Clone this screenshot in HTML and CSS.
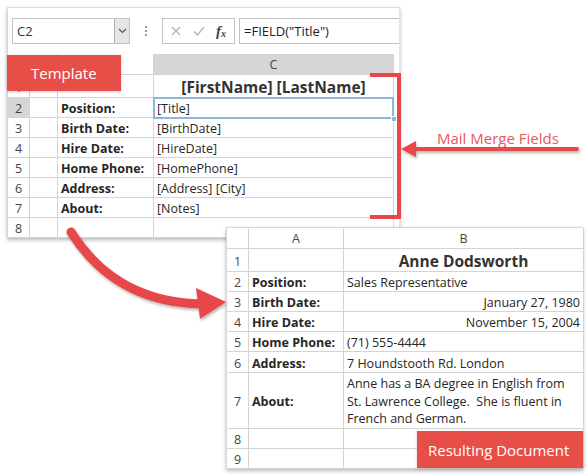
FILE: index.html
```html
<!DOCTYPE html>
<html>
<head>
<meta charset="utf-8">
<link rel="stylesheet" href="styles.css">
</head>
<body>
<div class="canvas">
  <div class="sheet sheet-template">
    <div class="fbar">
      <div class="namebox"><span class="nb-text">C2</span><span class="dd"><svg width="9" height="6" viewBox="0 0 9 6"><path d="M1 1 L4.5 4.5 L8 1" fill="none" stroke="#555" stroke-width="1.2"/></svg></span></div>
      <div class="dots"><i></i><i></i><i></i></div>
      <div class="fxbox">
        <svg class="ico" width="10" height="10" viewBox="0 0 10 10"><path d="M1 1 L9 9 M9 1 L1 9" stroke="#b5b5b5" stroke-width="1.4"/></svg>
        <svg class="ico" width="12" height="10" viewBox="0 0 12 10"><path d="M1 5.5 L4.5 9 L11 1" fill="none" stroke="#b5b5b5" stroke-width="1.4"/></svg>
        <span class="fx">f<sub>x</sub></span>
      </div>
      <div class="formula">=FIELD("Title")</div>
    </div>
    <div class="grid grid-t">
      <div class="c rh"></div><div class="c hd"></div><div class="c hd"></div><div class="c hd sel">C</div>
      <div class="c rh">1</div><div class="c"></div><div class="c"></div><div class="c title">[FirstName] [LastName]</div>
      <div class="c rh selrow">2</div><div class="c"></div><div class="c b">Position:</div><div class="c">[Title]</div>
      <div class="c rh">3</div><div class="c"></div><div class="c b">Birth Date:</div><div class="c">[BirthDate]</div>
      <div class="c rh">4</div><div class="c"></div><div class="c b">Hire Date:</div><div class="c">[HireDate]</div>
      <div class="c rh">5</div><div class="c"></div><div class="c b">Home Phone:</div><div class="c">[HomePhone]</div>
      <div class="c rh">6</div><div class="c"></div><div class="c b">Address:</div><div class="c">[Address] [City]</div>
      <div class="c rh">7</div><div class="c"></div><div class="c b">About:</div><div class="c">[Notes]</div>
      <div class="c rh">8</div><div class="c"></div><div class="c"></div><div class="c"></div>
      <div class="selbox"><span class="handle"></span></div>
    </div>
  </div>

  <div class="sheet sheet-result">
    <div class="grid grid-r">
      <div class="c rh"></div><div class="c hd">A</div><div class="c hd">B</div>
      <div class="c rh">1</div><div class="c"></div><div class="c title">Anne Dodsworth</div>
      <div class="c rh">2</div><div class="c b">Position:</div><div class="c">Sales Representative</div>
      <div class="c rh">3</div><div class="c b">Birth Date:</div><div class="c right">January 27, 1980</div>
      <div class="c rh">4</div><div class="c b">Hire Date:</div><div class="c right">November 15, 2004</div>
      <div class="c rh">5</div><div class="c b">Home Phone:</div><div class="c">(71) 555-4444</div>
      <div class="c rh">6</div><div class="c b">Address:</div><div class="c">7 Houndstooth Rd. London</div>
      <div class="c rh">7</div><div class="c b">About:</div><div class="c wrap">Anne has a BA degree in English from St. Lawrence College.&nbsp; She is fluent in French and German.</div>
      <div class="c rh">8</div><div class="c"></div><div class="c"></div>
      <div class="c rh">9</div><div class="c"></div><div class="c"></div>
    </div>
  </div>

  <div class="label label-template">Template</div>
  <div class="label label-result">Resulting Document</div>
  <div class="callout">Mail Merge Fields</div>

  <svg class="annot" width="588" height="474" viewBox="0 0 588 474">
    <defs>
      <filter id="sh" x="-20%" y="-20%" width="140%" height="140%">
        <feDropShadow dx="1" dy="2" stdDeviation="1.5" flood-color="#000" flood-opacity="0.3"/>
      </filter>
    </defs>
    <path d="M370 75 H399 V217 H370" fill="none" stroke="#e8474a" stroke-width="4"/>
    <g filter="url(#sh)">
      <path d="M577 149 H412" stroke="#e8474a" stroke-width="4" stroke-linecap="round"/>
      <path d="M401 149 L416 141 L416 157 Z" fill="#e8474a"/>
    </g>
    <g filter="url(#sh)">
      <path d="M71 232 Q 115 302 201 304" fill="none" stroke="#e8474a" stroke-width="9" stroke-linecap="round"/>
      <path d="M226 302 L196 288 L200 319 Z" fill="#e8474a"/>
    </g>
  </svg>
</div>
</body>
</html>
```
FILE: styles.css
```css
* { box-sizing: border-box; }
body { margin: 0; background: #fff; }
.canvas {
  position: relative;
  width: 588px;
  height: 474px;
  overflow: hidden;
  background: #fff;
  font-family: "Open Sans", "Noto Sans", sans-serif;
  font-size: 12px;
  color: #262626;
}
.sheet {
  position: absolute;
  background: #fff;
  box-shadow: 0 2px 4px rgba(0,0,0,0.28);
}
.sheet-template {
  left: 7px;
  top: 7px;
  width: 393px;
  height: 231px;
  border-top: 1px solid #dedede;
  border-left: 1px solid #d6d6d6;
  border-right: 1px solid #e6e6e6;
}
.sheet-result {
  left: 226px;
  top: 227px;
  width: 357px;
  border-top: 1px solid #d6d6d6;
  border-left: 1px solid #d6d6d6;
}
.fbar {
  height: 46px;
  display: flex;
  align-items: flex-start;
  padding: 10px 0 0 4px;
}
.namebox {
  width: 118px;
  height: 26px;
  border: 1px solid #c3c3c3;
  display: flex;
  align-items: center;
}
.nb-text { flex: 1; padding-left: 4px; font-size: 13px; color: #333; }
.dd {
  width: 15px;
  height: 24px;
  background: #e5e5e5;
  border-left: 1px solid #b0b0b0;
  display: flex;
  align-items: center;
  justify-content: center;
}
.dots {
  width: 32px;
  height: 26px;
  display: flex;
  flex-direction: column;
  align-items: center;
  justify-content: center;
  gap: 2px;
}
.dots i { width: 2px; height: 2px; background: #9a9a9a; display: block; }
.fxbox {
  width: 73px;
  height: 26px;
  border: 1px solid #c3c3c3;
  display: flex;
  align-items: center;
  padding-left: 8px;
  gap: 12px;
}
.fx {
  font-family: "Liberation Serif", serif;
  font-style: italic;
  font-weight: 700;
  font-size: 15px;
  color: #444;
  margin-left: -1px;
}
.fx sub { font-size: 10px; vertical-align: -1px; }
.formula {
  margin-left: 4px;
  flex: 1;
  height: 26px;
  border: 1px solid #c3c3c3;
  border-right: none;
  display: flex;
  align-items: center;
  padding-left: 4px;
  font-size: 13px;
  color: #222;
}
.grid { display: grid; position: relative; }
.grid-t {
  grid-template-columns: 22px 28px 96px 240px;
  grid-template-rows: 21px 23px repeat(7, 20px);
}
.grid-r {
  grid-template-columns: 22px 95px 240px;
  grid-template-rows: 21px 23px 20px 20px 20px 20px 21px 56px 20px 20px;
}
.c {
  border-right: 1px solid #d4d4d4;
  border-bottom: 1px solid #d4d4d4;
  display: flex;
  align-items: center;
  padding: 2px 3px 0;
  white-space: nowrap;
  overflow: hidden;
  font-size: 12.5px;
}
.rh, .hd { justify-content: center; color: #444; padding: 2px 0 0; }
.hd { padding-top: 1px; }
.sel, .selrow { background: #d6d6d6; }
.b { font-weight: 700; }
.title { font-size: 15.5px; font-weight: 700; justify-content: center; color: #333; }
.right { justify-content: flex-end; }
.wrap { white-space: normal; line-height: 17.5px; align-items: flex-start; padding-top: 2px; }
.selbox {
  position: absolute;
  left: 145px;
  top: 43px;
  width: 241px;
  height: 22px;
  border: 2px solid #8bb7dd;
  pointer-events: none;
}
.handle {
  position: absolute;
  right: -5px;
  bottom: -5px;
  width: 6px;
  height: 6px;
  background: #8bb7dd;
  border: 1px solid #fff;
}
.label {
  position: absolute;
  background: #e84e48;
  color: #fff;
  font-size: 15px;
  display: flex;
  align-items: center;
  box-shadow: 0 1px 3px rgba(0,0,0,0.2);
}
.label-template {
  left: 7px;
  top: 55px;
  width: 114px;
  height: 36px;
  padding-left: 24px;
}
.label-result {
  left: 417px;
  top: 431px;
  width: 166px;
  height: 37px;
  padding-left: 11px;
}
.callout {
  position: absolute;
  left: 437px;
  top: 128px;
  font-size: 15px;
  color: #e8595a;
}
.annot { position: absolute; left: 0; top: 0; pointer-events: none; }
```
